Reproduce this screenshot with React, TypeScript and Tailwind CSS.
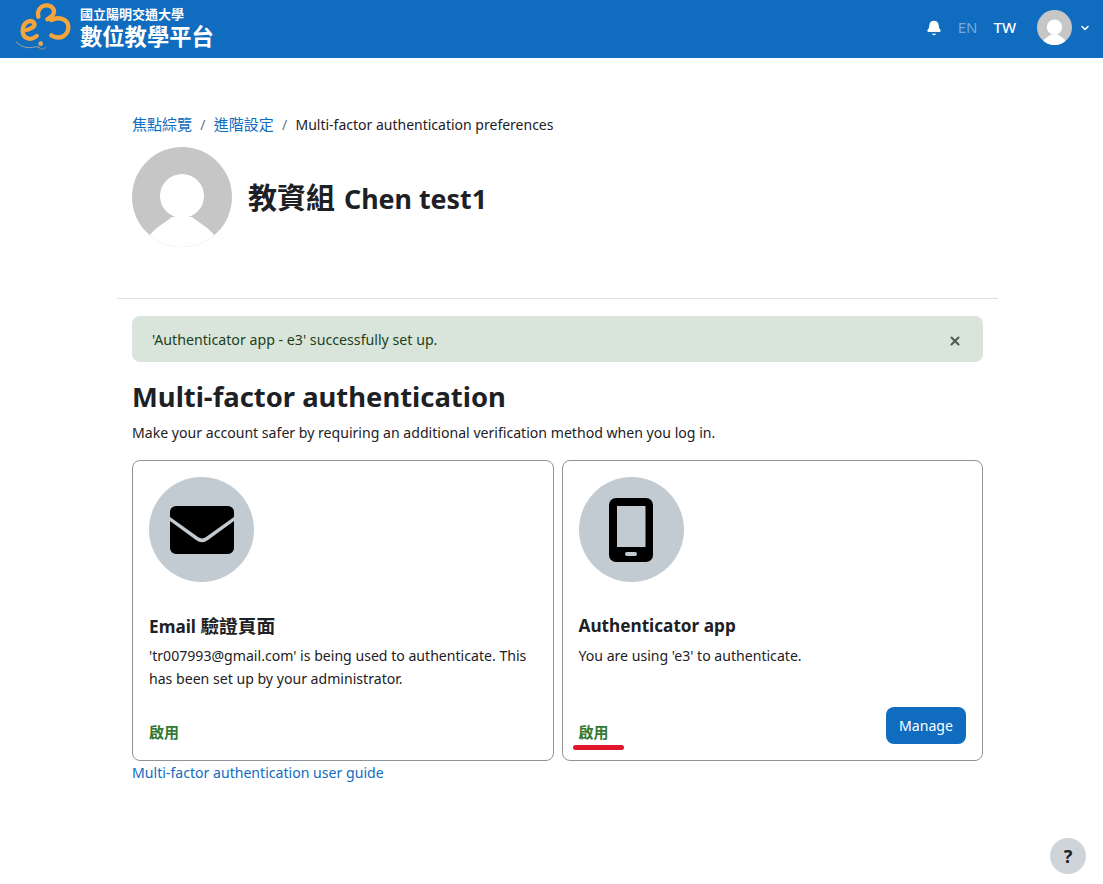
import { Bell, ChevronDown, X } from 'lucide-react';

const font = { fontFamily: '"Noto Sans", "Noto Sans CJK TC", sans-serif' };

function Logo() {
  return (
    <svg width="70" height="58" viewBox="0 0 210 174" fill="none" className="shrink-0">
      <g stroke="#f4a53c" strokeLinecap="round">
        <path d="M50 90C64 86 78 80 72 68C60 56 38 68 38 92C38 116 62 124 80 108" strokeWidth="13" />
        <path d="M85 50C80 30 94 16 110 16C130 16 140 36 124 50" strokeWidth="13" />
        <path d="M124 50L112 58M124 60C146 48 174 58 175 80C176 106 150 122 124 106" strokeWidth="13" />
      </g>
      <path d="M18 125C30 138 48 146 68 142C76 140 84 140 88 142" stroke="#f0c48c" strokeWidth="2" strokeLinecap="round" />
      <circle cx="92" cy="131" r="7" fill="#e8a85c" />
      <path d="M86 142C94 150 102 148 108 142" stroke="#e8a85c" strokeWidth="2" strokeLinecap="round" />
    </svg>
  );
}

function UserPicture({ size }: { size: number }) {
  return (
    <svg width={size} height={size} viewBox="0 0 100 100" className="shrink-0">
      <defs>
        <clipPath id={`clip-${size}`}>
          <circle cx="50" cy="50" r="50" />
        </clipPath>
      </defs>
      <g clipPath={`url(#clip-${size})`}>
        <rect width="100" height="100" fill="#c6c6c6" />
        <circle cx="50" cy="49" r="22" fill="#fff" />
        <path d="M18 88C23 81 31 77 40 70H60C69 77 77 81 82 88L90 100H10z" fill="#fff" />
      </g>
    </svg>
  );
}

function MethodCard({
  title,
  icon,
  text,
  manage,
  underline,
}: {
  title: React.ReactNode;
  icon: React.ReactNode;
  text: string;
  manage?: boolean;
  underline?: boolean;
}) {
  return (
    <div className="flex h-[301px] flex-col rounded-lg border border-[#8f9296] px-4 pt-4 pb-4">
      <div className="flex h-[105px] w-[105px] items-center justify-center rounded-full bg-[#c2cad2]">{icon}</div>
      <h3 className="mt-[33px] h-[21px] text-[17.2px] leading-[21px] font-bold text-[#1d2125]">{title}</h3>
      <p className="mt-[8px] h-[46px] text-[14.1px] leading-[23px] text-[#1d2125]">{text}</p>
      <div className="mt-auto flex items-end justify-between">
        <div className="relative mb-[1px] text-[15px] leading-[22px] font-semibold text-[#357a32]">
          啟用
          {underline ? (
            <div className="absolute top-[24px] left-[-6px] h-[5px] w-[51px] rounded-full bg-[#e0162b]" />
          ) : null}
        </div>
        {manage ? (
          <button className="h-[37px] w-[80px] rounded-lg bg-[#0f6cbf] text-[14.1px] text-white">Manage</button>
        ) : null}
      </div>
    </div>
  );
}

export default function App() {
  return (
    <div className="relative min-h-[884px] bg-white" style={font}>
      <header className="flex h-[58px] items-center bg-[#0f6cbf] pr-[12px] pl-[10px] text-white">
        <Logo />
        <div className="mt-[-3px] flex flex-col gap-[1px]">
          <span className="text-[13px] leading-[16px] font-bold">國立陽明交通大學</span>
          <span className="text-[22.3px] leading-[27px] font-bold">數位教學平台</span>
        </div>
        <div className="mt-[-3px] ml-auto flex items-center">
          <Bell size={16} fill="#fff" strokeWidth={2} />
          <span className="ml-[16px] text-[15px] text-[#74aadc]">EN</span>
          <span className="ml-[16px] text-[15px] font-medium">TW</span>
          <div className="ml-[21px]">
            <UserPicture size={35} />
          </div>
          <ChevronDown size={12} strokeWidth={3} className="ml-[7px]" />
        </div>
      </header>

      <div className="ml-[117px] w-[881px] pt-[56px]">
        <div className="px-[15px]">
          <nav className="flex h-[21px] items-center text-[14px] text-[#1d2125]">
            <a className="text-[15px] text-[#0f6cbf]">焦點綜覽</a>
            <span className="mx-[8.25px] text-[#6a737b]">/</span>
            <a className="text-[15px] text-[#0f6cbf]">進階設定</a>
            <span className="mx-[8.25px] text-[#6a737b]">/</span>
            <span>Multi-factor authentication preferences</span>
          </nav>
          <div className="mt-[12px] flex items-center">
            <UserPicture size={100} />
            <h2 className="mt-[2px] ml-[16px] text-[26.8px] leading-[34px] font-bold text-[#1d2125]">
              <span className="mr-[2px] text-[29px]">教資組</span> Chen test1
            </h2>
          </div>
        </div>

        <div className="mt-[51px] border-t border-[#dee2e6] px-[15px] pt-[17px]">
          <div className="flex h-[46px] items-center justify-between rounded-lg bg-[#d9e5da] pt-[2px] pr-[21px] pl-[20px] text-[14.2px] text-[#1c3f1a]">
            <span>'Authenticator app - e3' successfully set up.</span>
            <X size={14} strokeWidth={3.5} className="mt-[2px] text-[#4d5a50]" />
          </div>
          <h2 className="mt-[17px] text-[27.4px] leading-[36px] font-bold text-[#1d2125]">
            Multi-factor authentication
          </h2>
          <p className="mt-[7px] text-[14.1px] leading-[21px] text-[#1d2125]">
            Make your account safer by requiring an additional verification method when you log in.
          </p>
          <div className="mt-[17px] grid grid-cols-2 gap-[8px]">
            <MethodCard
              title={
                <>
                  Email <span className="text-[18.7px]">驗證頁面</span>
                </>
              }
              text="'tr007993@gmail.com' is being used to authenticate. This has been set up by your administrator."
              icon={
                <svg width="64" height="48" viewBox="0 0 64 48">
                  <path d="M6 0h52a6 6 0 0 1 6 6v5L36 31a7 7 0 0 1-8 0L0 11V6a6 6 0 0 1 6-6z" fill="#000" />
                  <path d="M0 15l26 19a10 10 0 0 0 12 0l26-19v27a6 6 0 0 1-6 6H6a6 6 0 0 1-6-6z" fill="#000" />
                </svg>
              }
            />
            <MethodCard
              title="Authenticator app"
              text="You are using 'e3' to authenticate."
              manage
              underline
              icon={
                <svg width="44" height="64" viewBox="0 0 44 64">
                  <rect width="44" height="64" rx="7" fill="#000" />
                  <rect x="8" y="8" width="28.5" height="41" fill="#c2cad2" />
                  <rect x="16" y="54" width="12" height="4" rx="2" fill="#c2cad2" />
                </svg>
              }
            />
          </div>
          <a className="mt-[1px] block text-[14.1px] leading-[21px] text-[#0f6cbf]">
            Multi-factor authentication user guide
          </a>
        </div>
      </div>

      <button className="absolute top-[838px] left-[1050px] flex h-[36px] w-[36px] items-center justify-center rounded-full bg-[#ced4da] text-[18px] font-bold text-[#1d2125]">
        ?
      </button>
    </div>
  );
}
